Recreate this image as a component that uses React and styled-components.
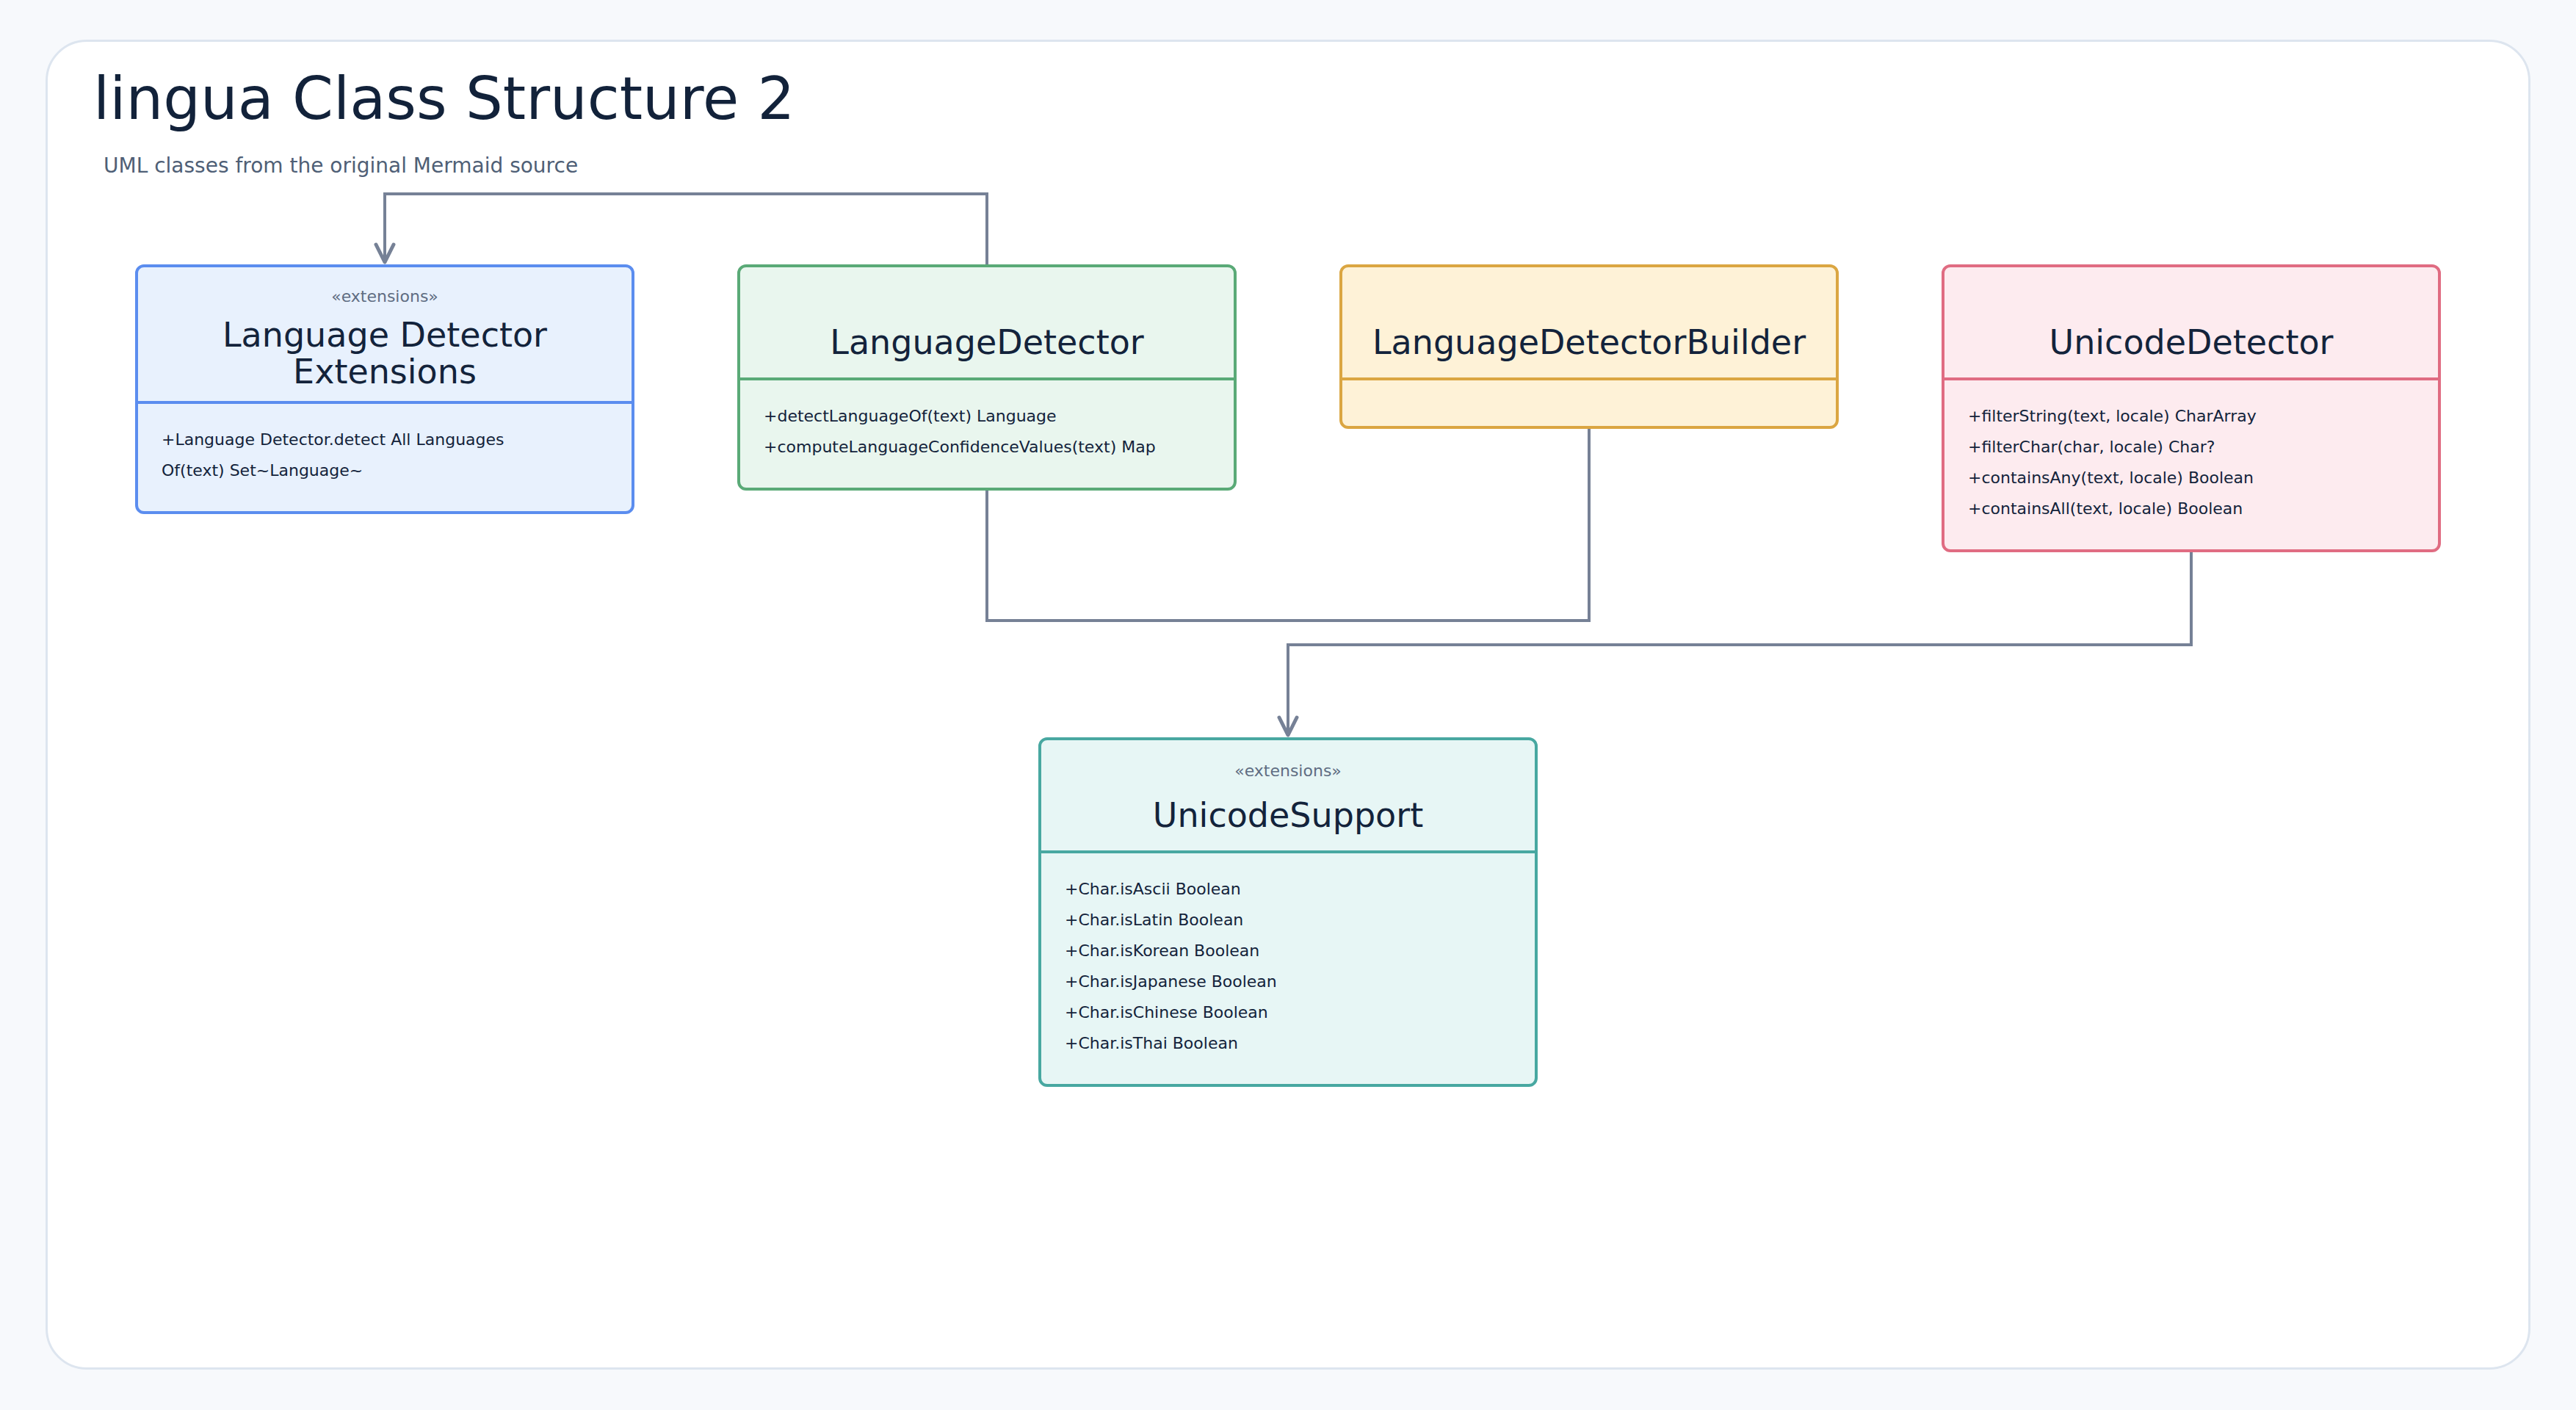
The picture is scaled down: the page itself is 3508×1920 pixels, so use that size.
import React from 'react';
import styled, { createGlobalStyle } from 'styled-components';

const Global = createGlobalStyle`
  html, body { margin: 0; padding: 0; background: #f7f9fc; }
  body { font-family: "DejaVu Sans", "Liberation Sans", sans-serif; }
  #root { width: 3508px; height: 1920px; }
  * { box-sizing: border-box; }
`;

const Page = styled.div`
  position: relative;
  width: 3508px;
  height: 1920px;
  padding: 54px 62px 55px;
  background: #f7f9fc;
  overflow: hidden;
`;

const Card = styled.main`
  height: 100%;
  background: #ffffff;
  border: 3px solid #dde5ef;
  border-radius: 56px;
  display: flex;
  flex-direction: column;
`;

const Heading = styled.header`
  padding: 38px 62px 0;
`;

const Title = styled.h1`
  margin: 0;
  font-size: 80px;
  line-height: 80px;
  font-weight: 400;
  color: #12223a;
`;

const Subtitle = styled.p`
  margin: 34px 0 0 14px;
  font-size: 28px;
  line-height: 34px;
  color: #4f5f76;
`;

const Diagram = styled.section`
  padding-top: 117px;
  display: flex;
  flex-direction: column;
  align-items: center;
`;

const TopRow = styled.div`
  display: flex;
  gap: 140px;
  align-items: flex-start;
`;

const BottomRow = styled.div`
  margin-top: 252px;
  display: flex;
  justify-content: center;
`;

const ClassBox = styled.div`
  width: 680px;
  border: 4px solid ${(p) => p.$stroke};
  background: ${(p) => p.$fill};
  border-radius: 12px;
  overflow: hidden;
`;

const ClassHeader = styled.div`
  display: flex;
  flex-direction: column;
  align-items: center;
  text-align: center;
  padding: ${(p) => (p.$compact ? '26px 24px 15px' : '28px 24px 23px')};
  border-bottom: 4px solid ${(p) => p.$stroke};
`;

const Stereotype = styled.div`
  height: 28px;
  font-size: 22px;
  line-height: 28px;
  color: #5f6d82;
`;

const ClassName = styled.div`
  margin-top: ${(p) => (p.$compact ? 13 : 21)}px;
  font-size: 46px;
  line-height: 50px;
  color: #13233b;
`;

const Members = styled.ul`
  list-style: none;
  margin: 0;
  padding: 28px 32px 34px;
`;

const Member = styled.li`
  font-size: 22px;
  line-height: 42px;
  color: #13233b;
  white-space: nowrap;
`;

const Connectors = styled.svg`
  position: absolute;
  top: 0;
  left: 0;
  pointer-events: none;
`;

const palette = {
  blue: { stroke: '#5b8def', fill: '#e8f1fd' },
  green: { stroke: '#5aaa77', fill: '#e9f6ee' },
  yellow: { stroke: '#dba642', fill: '#fef2d7' },
  pink: { stroke: '#e06c82', fill: '#fdebef' },
  teal: { stroke: '#48a8a1', fill: '#e7f6f5' },
};

function UmlClass({ color, stereotype, name, members, compact }) {
  const c = palette[color];
  return (
    <ClassBox $stroke={c.stroke} $fill={c.fill}>
      <ClassHeader $stroke={c.stroke} $compact={compact}>
        <Stereotype>{stereotype ? `«${stereotype}»` : ''}</Stereotype>
        <ClassName $compact={compact}>{name}</ClassName>
      </ClassHeader>
      <Members>
        {members.map((m, i) => (
          <Member key={i}>
            {Array.isArray(m)
              ? m.map((part, j) => (
                  <React.Fragment key={j}>
                    {j > 0 && <br />}
                    {part}
                  </React.Fragment>
                ))
              : m}
          </Member>
        ))}
      </Members>
    </ClassBox>
  );
}

export default function App() {
  const line = '#768196';
  return (
    <>
      <Global />
      <Page>
        <Card>
          <Heading>
            <Title>lingua Class Structure 2</Title>
            <Subtitle>UML classes from the original Mermaid source</Subtitle>
          </Heading>
          <Diagram>
            <TopRow>
              <UmlClass
                color="blue"
                compact
                stereotype="extensions"
                name="Language Detector Extensions"
                members={[['+Language Detector.detect All Languages', 'Of(text) Set~Language~']]}
              />
              <UmlClass
                color="green"
                name="LanguageDetector"
                members={[
                  '+detectLanguageOf(text) Language',
                  '+computeLanguageConfidenceValues(text) Map',
                ]}
              />
              <UmlClass color="yellow" name="LanguageDetectorBuilder" members={[]} />
              <UmlClass
                color="pink"
                name="UnicodeDetector"
                members={[
                  '+filterString(text, locale) CharArray',
                  '+filterChar(char, locale) Char?',
                  '+containsAny(text, locale) Boolean',
                  '+containsAll(text, locale) Boolean',
                ]}
              />
            </TopRow>
            <BottomRow>
              <UmlClass
                color="teal"
                stereotype="extensions"
                name="UnicodeSupport"
                members={[
                  '+Char.isAscii Boolean',
                  '+Char.isLatin Boolean',
                  '+Char.isKorean Boolean',
                  '+Char.isJapanese Boolean',
                  '+Char.isChinese Boolean',
                  '+Char.isThai Boolean',
                ]}
              />
            </BottomRow>
          </Diagram>
        </Card>
        <Connectors width="3508" height="1920" viewBox="0 0 3508 1920">
          <g fill="none" stroke={line} strokeWidth="4" strokeLinejoin="miter">
            <path d="M1344 360 V264 H524 V355" />
            <path d="M1344 668 V845 H2164 V584" />
            <path d="M2984 752 V878 H1754 V1000" />
          </g>
          <g fill="none" stroke={line} strokeWidth="5" strokeLinecap="round" strokeLinejoin="round">
            <path d="M512 333 L524 357 L536 333" />
            <path d="M1742 977 L1754 1001 L1766 977" />
          </g>
        </Connectors>
      </Page>
    </>
  );
}
